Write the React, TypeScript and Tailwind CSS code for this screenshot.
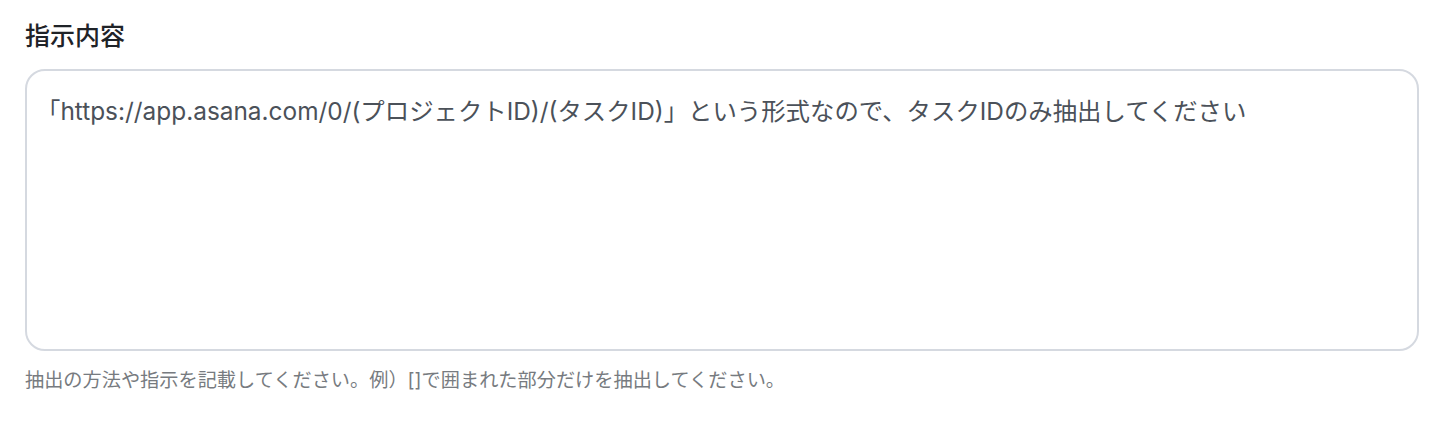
import React from 'react';

const FONT = 'Inter, "Noto Sans CJK JP", sans-serif';

const App: React.FC = () => {
  return (
    <div className="w-[1454px] h-[430px] bg-white px-[25px] pt-[18px]" style={{ fontFamily: FONT }}>
      <label className="block text-[25px] leading-[36px] font-medium text-[#1f2328]">指示内容</label>
      <textarea
        defaultValue="「https://app.asana.com/0/(プロジェクトID)/(タスクID)」という形式なので、タスクIDのみ抽出してください"
        className="mt-[15px] block w-[1394px] h-[282px] resize-none rounded-[20px] border-2 border-[#d5d9e0] pl-[9px] pr-[17px] pt-[22px] text-[24.4px] leading-[36px] text-[#4b5159] outline-none"
        style={{ fontFamily: FONT }}
      />
      <p className="mt-[15px] text-[19.2px] leading-[28px] text-[#777b80]">
        抽出の方法や指示を記載してください。例）[]で囲まれた部分だけを抽出してください。
      </p>
    </div>
  );
};

export default App;
